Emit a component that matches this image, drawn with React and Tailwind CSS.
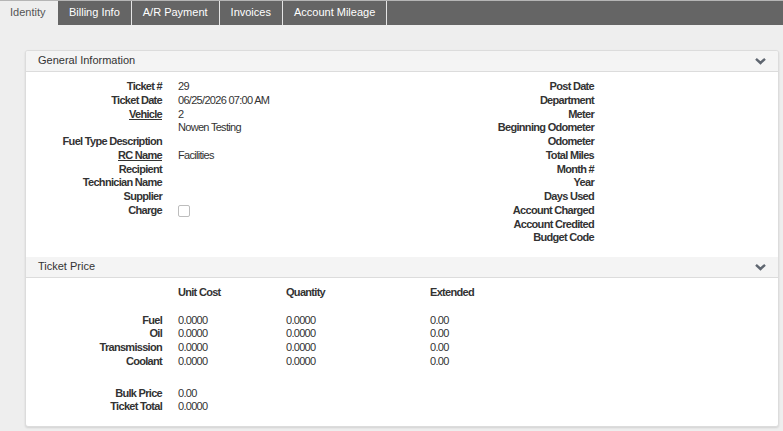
import React from "react";

const font = { fontFamily: '"Liberation Sans", Arial, sans-serif' };

function Chevron() {
  return (
    <svg width="11" height="8" viewBox="0 0 11 8" className="block">
      <path d="M1 1.8 L5.5 6 L10 1.8" fill="none" stroke="#5f6670" strokeWidth="2.4" />
    </svg>
  );
}

function PanelHeader({ title }) {
  return (
    <div className="flex items-center justify-between h-[21px] bg-[#f4f4f4] border-b border-[#dcdcdc] pl-[12px] pr-[12px]">
      <span className="text-[11px] tracking-normal text-[#333]">{title}</span>
      <Chevron />
    </div>
  );
}

function Row({ label, value, labelW, underline, children }) {
  return (
    <div className="flex h-[13.75px] items-center">
      <div className={`shrink-0 text-right font-bold ${labelW}`}>
        {label && <span className={underline ? "underline" : ""}>{label}</span>}
      </div>
      <div className="pl-[16px] whitespace-nowrap">{children ?? value}</div>
    </div>
  );
}

export default function App() {
  const tabs = ["Billing Info", "A/R Payment", "Invoices", "Account Mileage"];
  const left = [
    ["Ticket #", "29"],
    ["Ticket Date", "06/25/2026 07:00 AM"],
    ["Vehicle", "2", true],
    ["", "Nowen Testing"],
    ["Fuel Type Description", ""],
    ["RC Name", "Facilities", true],
    ["Recipient", ""],
    ["Technician Name", ""],
    ["Supplier", ""],
  ];
  const right = [
    "Post Date",
    "Department",
    "Meter",
    "Beginning Odometer",
    "Odometer",
    "Total Miles",
    "Month #",
    "Year",
    "Days Used",
    "Account Charged",
    "Account Credited",
    "Budget Code",
  ];
  const priceRows = ["Fuel", "Oil", "Transmission", "Coolant"];

  return (
    <div style={font} className="w-[783px] h-[431px] bg-[#eeeeee] text-[11px] tracking-[-0.7px] leading-[1.25] text-[#333] overflow-hidden">
      {/* Tab bar */}
      <div className="flex h-[25px] bg-[#656565] border-t border-[#b5b5b5] tracking-normal">
        <div className="flex items-center w-[58px] pl-[10px] bg-[#eeeeee] text-[#555] text-[11px]">Identity</div>
        {tabs.map((t, i) => (
          <div
            key={t}
            className={`flex items-center px-[11px] text-white text-[11px] ${i === 0 ? "" : "border-l border-[#e5e5e5]"} ${i === tabs.length - 1 ? "border-r border-[#e5e5e5]" : ""}`}
          >
            {t}
          </div>
        ))}
      </div>

      {/* Panel */}
      <div className="ml-[25px] mr-[4px] mt-[25px] bg-white border border-[#dcdcdc] rounded-[3px] shadow-[0_1px_2px_rgba(0,0,0,0.12)] overflow-hidden">
        <PanelHeader title="General Information" />
        <div className="flex pt-[8px] pb-[12px]">
          <div className="w-[376px] flex flex-col">
            {left.map(([l, v, u], i) => (
              <Row key={i} label={l} value={v} underline={u} labelW="w-[136px]" />
            ))}
            <Row label="Charge" labelW="w-[136px]">
              <div className="w-[12px] h-[12px] border border-[#bdbdbd] rounded-[2px] bg-white mt-[1px]" />
            </Row>
          </div>
          <div className="flex-1 flex flex-col">
            {right.map((l) => (
              <Row key={l} label={l} value="" labelW="w-[192px]" />
            ))}
          </div>
        </div>

        <PanelHeader title="Ticket Price" />
        <div className="flex flex-col pt-[8px] pb-[12px]">
          <div className="flex h-[13.75px] items-center font-bold">
            <div className="w-[152px] shrink-0" />
            <div className="w-[108px]">Unit Cost</div>
            <div className="w-[144px]">Quantity</div>
            <div>Extended</div>
          </div>
          <div className="h-[13.75px]" />
          {priceRows.map((r) => (
            <div key={r} className="flex h-[13.75px] items-center">
              <div className="w-[136px] shrink-0 text-right font-bold">{r}</div>
              <div className="w-[16px] shrink-0" />
              <div className="w-[108px]">0.0000</div>
              <div className="w-[144px]">0.0000</div>
              <div>0.00</div>
            </div>
          ))}
          <div className="h-[18px]" />
          <Row label="Bulk Price" value="0.00" labelW="w-[136px]" />
          <Row label="Ticket Total" value="0.0000" labelW="w-[136px]" />
        </div>
      </div>
    </div>
  );
}
